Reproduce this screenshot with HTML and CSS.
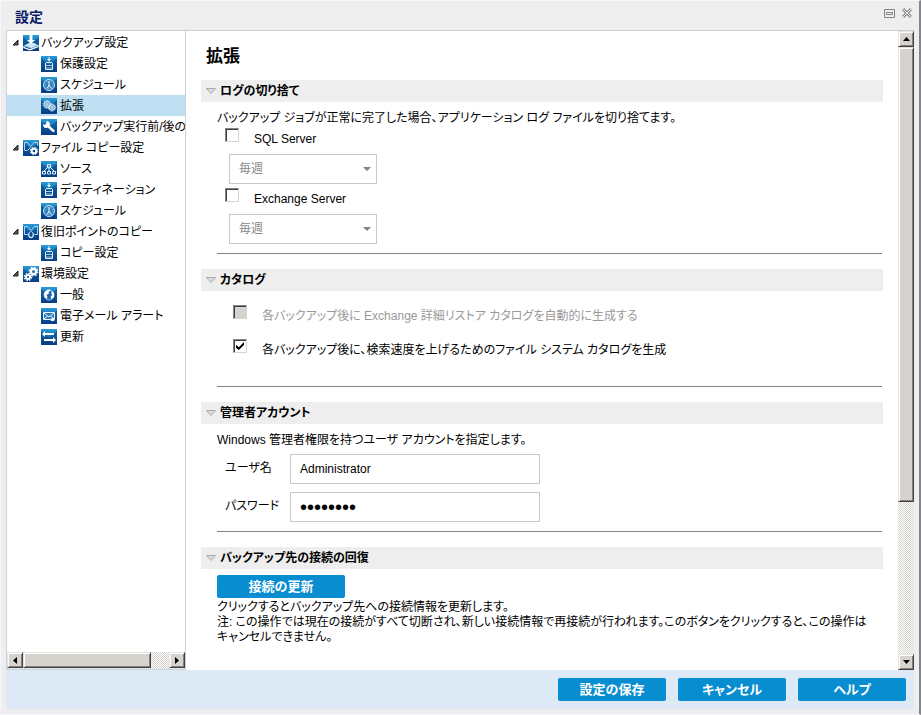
FILE: index.html
```html
<!DOCTYPE html>
<html lang="ja">
<head>
<meta charset="utf-8">
<title>設定</title>
<link rel="stylesheet" href="styles.css">
</head>
<body>
<svg class="sprite" aria-hidden="true">
  <defs>
    <linearGradient id="tile" x1="0" y1="0" x2="0" y2="1">
      <stop offset="0" stop-color="#2a9ad6"/><stop offset=".5" stop-color="#146db3"/><stop offset="1" stop-color="#06408c"/>
    </linearGradient>
    <symbol id="bg" viewBox="0 0 16 16"><path fill="url(#tile)" d="M0 0h16v16H0z"/><path fill="#07397c" opacity=".5" d="M0 2l8 7 8-7v14H0z"/></symbol>
    <symbol id="backup" viewBox="0 0 16 16"><use href="#bg"/><path fill="#cfe6f5" d="M1 10.500L6 8h5l4 2-6 4z"/><path fill="#fff" d="M6.500 0h3v5H12L8 9 4 5h2.500z"/><path fill="none" stroke="#fff" stroke-width="1.200" d="M1 11v1.500l6 2.300 8-3.300V10"/><path fill="none" stroke="#5ba3d2" stroke-width=".700" d="M2 11l6 2.300 6.500-2.800"/></symbol>
    <symbol id="store" viewBox="0 0 16 16"><use href="#bg"/><path fill="none" stroke="#e6f2fa" d="M5 6.500h6M4.500 7v6.500h7V7"/><path fill="#9fcbe8" d="M5 9h6v1H5zM5 11.500h6v1H5z"/><path fill="#fff" d="M7.500 1h1v2H10L8 5.500 6 3h1.500z"/></symbol>
    <symbol id="clock" viewBox="0 0 16 16"><use href="#bg"/><circle cx="8" cy="8" r="5.500" fill="#2b7fbd" stroke="#c5e2f4"/><circle cx="8" cy="8" r="3.700" fill="none" stroke="#b5d9ef" stroke-dasharray=".900 2"/><path fill="none" stroke="#fff" d="M8 4v5M8 8.500l2.500 3M8 8.500l-2 3"/></symbol>
    <symbol id="gears" viewBox="0 0 16 16"><use href="#bg"/><g stroke="#e4f2fb"><circle cx="6" cy="6.500" r="3" fill="#5b9fce"/><circle cx="6" cy="6.500" r="4" fill="none" stroke-dasharray="1 1.100"/><circle cx="6" cy="6.500" r="1" fill="none"/><circle cx="11" cy="9.500" r="2.800" fill="#5b9fce"/><circle cx="11" cy="9.500" r="3.600" fill="none" stroke-dasharray="1 1"/><circle cx="11" cy="9.500" r=".900" fill="none"/></g></symbol>
    <symbol id="wrench" viewBox="0 0 16 16"><use href="#bg"/><path fill="none" stroke="#fff" stroke-width="2.500" stroke-linecap="round" d="M7 7l5.500 5"/><path fill="#fff" d="M5.500 2l-.200 2.700L3.500 6 2 5c-.300 3 1.500 4.500 4 4L9 6C9 3.500 7.500 2 5.500 2z"/></symbol>
    <symbol id="filecopy" viewBox="0 0 16 16"><use href="#bg"/><path fill="none" stroke="#a9d8f3" d="M1.500 2.500v8h3l3-3M1.500 2.500h3l3 4 3.500-4h3.500v3"/><circle cx="11" cy="11" r="2.300" fill="none" stroke="#fff" stroke-width="2"/><circle cx="11" cy="11" r="3.700" fill="none" stroke="#fff" stroke-dasharray="1.500 1.400"/></symbol>
    <symbol id="source" viewBox="0 0 16 16"><use href="#bg"/><path fill="none" stroke="#e8f5fc" d="M6.500 3.500h3v2.500h-3zM1.500 10.500h3v2.500h-3zM6.500 10.500h3v2.500h-3zM11.500 10.500h3v2.500h-3zM8 6v4M7 6l-4 4M9 6l4 4"/></symbol>
    <symbol id="pointcopy" viewBox="0 0 16 16"><use href="#bg"/><path fill="none" stroke="#a9d8f3" d="M1.500 2.500v8h3l3-3M14.500 2.500v8h-3l-3-3M1.500 2.500h3l3.500 4 3.500-4h3"/><path fill="none" stroke="#e1f2fb" stroke-width="1.300" d="M6 9.500c-1 3 .5 4 2 4s3-1 2-4"/></symbol>
    <symbol id="prefs" viewBox="0 0 16 16"><use href="#bg"/><g fill="none" stroke="#fff"><circle cx="10.500" cy="5.500" r="2.600" stroke-width="2.200"/><circle cx="10.500" cy="5.500" r="4.200" stroke-dasharray="1.700 1.600" stroke-width="1.400"/><circle cx="5" cy="11" r="2" stroke-width="2"/><circle cx="5" cy="11" r="3.500" stroke-dasharray="1.500 1.250" stroke-width="1.400"/></g></symbol>
    <symbol id="globe" viewBox="0 0 16 16"><use href="#bg"/><circle cx="8" cy="8" r="5" fill="#1a62a5" stroke="#8dc3e6"/><path fill="#fff" d="M3 6l3-3 3-.5.5 1.500-2 1L8 6.500 5.500 8l1 2L6 12 3.500 10zM11 4l2 2v4l-2 2-1.500-1 .5-2 1.500-1-1.500-1.500z"/></symbol>
    <symbol id="mail" viewBox="0 0 16 16"><use href="#bg"/><path fill="#2b7ab8" stroke="#e8f5fc" d="M2.500 4.500h11v7h-11z"/><path fill="none" stroke="#e8f5fc" d="M3 5l5 4 5-4M3 11l3.500-3M13 11L9.500 8"/><path fill="#fff" d="M11.500 9l2 4h-4z"/></symbol>
    <symbol id="update" viewBox="0 0 16 16"><use href="#bg"/><path fill="#fff" d="M1 5l3-3v2h9v2H4v2zM15 11l-3-3v2H3v2h9v2z"/></symbol>
    <symbol id="twisty" viewBox="0 0 7 7"><path fill="#555" stroke="#222" d="M6 1v5H1z"/></symbol>
    <symbol id="fold" viewBox="0 0 10 6"><path fill="#ddd" stroke="#aaa" d="M.5.500h9L5 5.500z"/></symbol>
  </defs>
</svg>
<div class="window">
  <header class="titlebar">
    <h1 class="window-title">設定</h1>
    <div class="window-tools">
      <button class="tool" type="button" aria-label="最大化"><svg width="11" height="9" viewBox="0 0 11 9"><path fill="none" stroke="#858585" d="M.5.500h10v8H.500zM2.500 3.500h6v2h-6z"/></svg></button>
      <button class="tool" type="button" aria-label="閉じる"><svg width="10" height="10" viewBox="0 0 10 10"><path stroke="#8a8a8a" stroke-width="3" d="M1 1l8 8M9 1L1 9"/><path stroke="#eee" d="M1 1l8 8M9 1L1 9"/></svg></button>
    </div>
  </header>
  <div class="workspace">
    <nav class="sidebar">
      <ul class="tree">
        <li><a class="node" href="#"><svg class="twisty"><use href="#twisty"/></svg><svg class="icon"><use href="#backup"/></svg>バックアップ設定</a>
          <ul>
            <li><a class="node child" href="#"><svg class="icon"><use href="#store"/></svg>保護設定</a></li>
            <li><a class="node child" href="#"><svg class="icon"><use href="#clock"/></svg>スケジュール</a></li>
            <li><a class="node child selected" href="#"><svg class="icon"><use href="#gears"/></svg>拡張</a></li>
            <li><a class="node child" href="#"><svg class="icon"><use href="#wrench"/></svg>バックアップ実行前/後の</a></li>
          </ul></li>
        <li><a class="node" href="#"><svg class="twisty"><use href="#twisty"/></svg><svg class="icon"><use href="#filecopy"/></svg>ファイル コピー設定</a>
          <ul>
            <li><a class="node child" href="#"><svg class="icon"><use href="#source"/></svg>ソース</a></li>
            <li><a class="node child" href="#"><svg class="icon"><use href="#store"/></svg>デスティネーション</a></li>
            <li><a class="node child" href="#"><svg class="icon"><use href="#clock"/></svg>スケジュール</a></li>
          </ul></li>
        <li><a class="node" href="#"><svg class="twisty"><use href="#twisty"/></svg><svg class="icon"><use href="#pointcopy"/></svg>復旧ポイントのコピー</a>
          <ul>
            <li><a class="node child" href="#"><svg class="icon"><use href="#store"/></svg>コピー設定</a></li>
          </ul></li>
        <li><a class="node" href="#"><svg class="twisty"><use href="#twisty"/></svg><svg class="icon"><use href="#prefs"/></svg>環境設定</a>
          <ul>
            <li><a class="node child" href="#"><svg class="icon"><use href="#globe"/></svg>一般</a></li>
            <li><a class="node child" href="#"><svg class="icon"><use href="#mail"/></svg>電子メール アラート</a></li>
            <li><a class="node child" href="#"><svg class="icon"><use href="#update"/></svg>更新</a></li>
          </ul></li>
      </ul>
      <div class="scrollbar horizontal">
        <button class="scroll-button" type="button" aria-label="左へ"><svg width="4" height="7" viewBox="0 0 4 7"><path d="M4 0v7L0 3.500z"/></svg></button>
        <div class="track"><div class="thumb"></div></div>
        <button class="scroll-button" type="button" aria-label="右へ"><svg width="4" height="7" viewBox="0 0 4 7"><path d="M0 0v7l4-3.500z"/></svg></button>
      </div>
    </nav>
    <main class="content">
      <h2 class="page-title">拡張</h2>
      <section class="panel">
        <h3 class="panel-head"><svg class="fold"><use href="#fold"/></svg>ログの切り捨て</h3>
        <div class="panel-body">
          <p class="lead">バックアップ ジョブが正常に完了した場合、アプリケーション ログ ファイルを切り捨てます。</p>
          <div class="log-group">
            <div class="check"><input type="checkbox" id="sql"><label for="sql">SQL Server</label></div>
            <div class="select"><select aria-label="SQL Server の頻度" disabled><option>毎週</option></select></div>
          </div>
          <div class="log-group">
            <div class="check"><input type="checkbox" id="exchange"><label for="exchange">Exchange Server</label></div>
            <div class="select"><select aria-label="Exchange Server の頻度" disabled><option>毎週</option></select></div>
          </div>
        </div>
      </section>
      <section class="panel">
        <h3 class="panel-head"><svg class="fold"><use href="#fold"/></svg>カタログ</h3>
        <div class="panel-body catalog">
          <div class="check"><input type="checkbox" id="cat-exchange" disabled><label for="cat-exchange">各バックアップ後に Exchange 詳細リストア カタログを自動的に生成する</label></div>
          <div class="check"><input type="checkbox" id="cat-file" checked><label for="cat-file">各バックアップ後に、検索速度を上げるためのファイル システム カタログを生成</label></div>
        </div>
      </section>
      <section class="panel">
        <h3 class="panel-head"><svg class="fold"><use href="#fold"/></svg>管理者アカウント</h3>
        <div class="panel-body">
          <p class="lead">Windows 管理者権限を持つユーザ アカウントを指定します。</p>
          <div class="fields">
            <label for="user">ユーザ名</label><input class="text" type="text" id="user" value="Administrator">
            <label for="pass">パスワード</label><input class="text" type="password" id="pass" value="password">
          </div>
        </div>
      </section>
      <section class="panel">
        <h3 class="panel-head"><svg class="fold"><use href="#fold"/></svg>バックアップ先の接続の回復</h3>
        <div class="panel-body connection">
          <button class="button" type="button">接続の更新</button>
          <p>クリックするとバックアップ先への接続情報を更新します。<br>注: この操作では現在の接続がすべて切断され、新しい接続情報で再接続が行われます。このボタンをクリックすると、この操作は<br>キャンセルできません。</p>
        </div>
      </section>
    </main>
    <div class="scrollbar vertical">
      <button class="scroll-button" type="button" aria-label="上へ"><svg width="7" height="4" viewBox="0 0 7 4"><path d="M0 4h7L3.500 0z"/></svg></button>
      <div class="track"><div class="thumb"></div></div>
      <button class="scroll-button" type="button" aria-label="下へ"><svg width="7" height="4" viewBox="0 0 7 4"><path d="M0 0h7L3.500 4z"/></svg></button>
    </div>
  </div>
  <footer class="actions">
    <button class="button" type="button">設定の保存</button>
    <button class="button" type="button">キャンセル</button>
    <button class="button" type="button">ヘルプ</button>
  </footer>
</div>
</body>
</html>
```
FILE: styles.css
```css
* { box-sizing: border-box; }

body, h1, h2, h3, p, ul { margin: 0; padding: 0; }
ul { list-style: none; }

body {
  background: #f6f6fb;
  color: #000;
  font: 12px/16px "Liberation Sans", "Noto Sans CJK JP", sans-serif;
  font-feature-settings: "palt";
}

button, input, select { font: inherit; font-feature-settings: inherit; }
svg { display: block; flex: none; }
.sprite { position: absolute; width: 0; height: 0; }

/* Window frame */
.window {
  display: flex;
  flex-direction: column;
  height: 100vh;
  padding: 0 5px 5px;
  background: #eee;
  border: 1px solid #f6f6fb;
  border-right: 2px solid #85858c;
}

.titlebar {
  display: flex;
  flex: none;
  align-items: center;
  justify-content: space-between;
  height: 30px;
  padding: 3px 0 0 9px;
  border-bottom: 1px solid #ccc;
}

.window-title { color: #0a1a66; font-size: 14px; line-height: 20px; }
.window-tools { display: flex; align-items: center; gap: 7px; padding: 0 2px 8px 0; }
.tool { padding: 0; border: 0; background: none; }

.workspace { display: flex; flex: 1; min-height: 0; background: #fff; }

/* Navigation tree */
.sidebar {
  display: flex;
  flex: none;
  flex-direction: column;
  width: 180px;
  border: 1px solid #c9d3de;
  border-top: 0;
}

.tree { flex: 1; min-height: 0; padding-top: 1px; overflow: hidden; }

.node {
  display: flex;
  align-items: center;
  gap: 2px;
  height: 21px;
  padding-left: 5px;
  color: #000;
  text-decoration: none;
  white-space: nowrap;
}

.child { gap: 3px; padding-left: 34px; }
.selected { background: #bfe0f2; }
.icon { width: 16px; height: 16px; }
.twisty { width: 7px; height: 7px; margin-right: 2px; }

/* Scroll bars */
.scrollbar { display: flex; flex: none; background: #eceae6; }
.horizontal { height: 17px; }
.vertical { flex-direction: column; width: 16px; }

.scroll-button, .thumb {
  background: #d6d3ce;
  border: 1px solid;
  border-color: #e6e4e0 #404040 #404040 #e6e4e0;
  box-shadow: inset 1px 1px #fff, inset -1px -1px #848284;
}

.scroll-button {
  display: flex;
  flex: none;
  align-items: center;
  justify-content: center;
  width: 16px;
  height: 16px;
  padding: 0;
}

.track {
  flex: 1;
  min-height: 0;
  background: repeating-conic-gradient(#d6d3ce 0 25%, #fff 0 50%) 0 0 / 2px 2px;
}

.horizontal .thumb { width: 88%; height: 16px; }
.vertical .thumb { height: 75%; }

/* Content */
.content { flex: 1; min-width: 0; padding: 16px 15px 0; overflow: hidden; }
.page-title { padding-left: 5px; font-size: 17px; line-height: 20px; margin-bottom: 13px; }

.panel-head {
  display: flex;
  align-items: center;
  gap: 4px;
  height: 22px;
  padding-left: 5px;
  background: #eee;
  font-size: 12px;
}

.fold { width: 10px; height: 6px; }

.panel-body {
  margin: 0 1px 15px 16px;
  padding: 8px 0 9px;
  border-bottom: 1px solid #848284;
}

.lead { margin-bottom: 6px; }

.check { display: flex; gap: 15px; padding-left: 8px; line-height: 22px; }

.check input {
  appearance: none;
  flex: none;
  display: grid;
  place-items: center;
  width: 14px;
  height: 14px;
  margin: 0;
  background: #fff;
  border: 1px solid;
  border-color: #848284 #d6d3ce #d6d3ce #848284;
  box-shadow: inset 1px 1px #404040;
}

.check input:checked::before {
  content: "";
  width: 8px;
  height: 8px;
  background: #000;
  clip-path: polygon(0 35%, 35% 65%, 100% 0, 100% 38%, 35% 100%, 0 72%);
}

.check input:disabled { background: #d6d3ce; }
.check input:disabled + label { color: #999; }

.log-group { display: grid; grid-template-rows: 26px 30px; }
.log-group + .log-group { margin-top: 4px; }
.lead:has(+ .log-group) { margin-bottom: 2px; }

.select { position: relative; width: 148px; margin-left: 12px; }

.select::after {
  content: "";
  position: absolute;
  top: 13px;
  right: 6px;
  border: 4px solid transparent;
  border-top-color: #78838c;
  border-bottom: 0;
}

.select select {
  appearance: none;
  width: 100%;
  height: 30px;
  padding: 0 9px;
  background: #fff;
  border: 1px solid #c8c8c8;
  border-radius: 0;
  color: #888;
  opacity: 1;
}

.catalog { display: grid; gap: 12px; padding: 14px 0 25px 8px; }

.fields {
  display: grid;
  grid-template-columns: 65px 250px;
  gap: 8px 0;
  padding-left: 8px;
  line-height: 28px;
}

.text {
  height: 30px;
  padding: 0 9px;
  background: #fff;
  border: 1px solid #c8c8c8;
  color: #000;
}

.text[type="password"] { font-size: 20px; }

.connection { margin-bottom: 0; padding: 6px 0 0; border: 0; line-height: 15px; }
.connection .button { width: 128px; margin-bottom: 2px; }

/* Actions */
.button {
  display: block;
  width: 108px;
  height: 23px;
  padding: 0;
  background: #088dd0;
  border: 0;
  border-radius: 2px;
  color: #fff;
  font-size: 13px;
  font-weight: bold;
}

.actions {
  display: flex;
  flex: none;
  justify-content: flex-end;
  gap: 12px;
  padding: 8px;
  background: #dde9f5;
}
```
